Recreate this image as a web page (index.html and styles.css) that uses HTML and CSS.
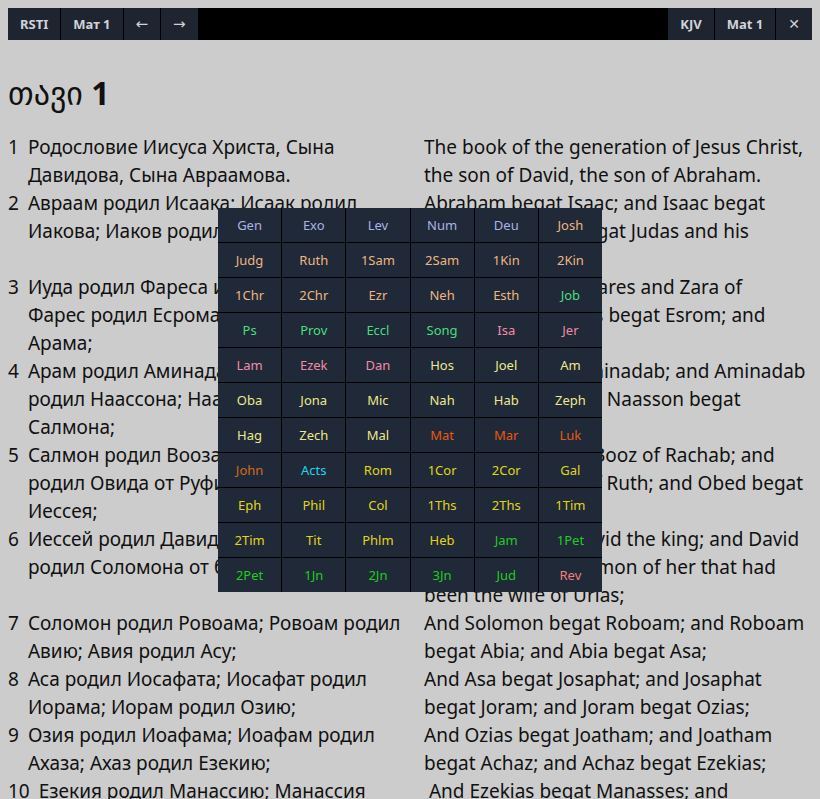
FILE: index.html
```html
<!DOCTYPE html>
<html lang="ru">
<head>
<meta charset="utf-8">
<title>Bible</title>
<link rel="stylesheet" href="styles.css">
</head>
<body>
<div class="toolbar">
  <div class="group">
    <button class="btn">RSTI</button>
    <button class="btn">Мат 1</button>
    <button class="btn arrow">←</button>
    <button class="btn arrow">→</button>
  </div>
  <div class="group">
    <button class="btn">KJV</button>
    <button class="btn">Mat 1</button>
    <button class="btn close">✕</button>
  </div>
</div>

<h1 class="title"><span class="geo">თავი</span> 1</h1>

<div class="verses">
  <p class="v"><span class="num">1</span>Родословие Иисуса Христа, Сына Давидова, Сына Авраамова.</p>
  <p class="t">The book of the generation of Jesus Christ, the son of David, the son of Abraham.</p>
  <p class="v"><span class="num">2</span>Авраам родил Исаака; Исаак родил Иакова; Иаков родил Иуду и братьев его;</p>
  <p class="t">Abraham begat Isaac; and Isaac begat Jacob; and Jacob begat Judas and his brethren;</p>
  <p class="v"><span class="num">3</span>Иуда родил Фареса и Зару от Фамари; Фарес родил Есрома; Есром родил Арама;</p>
  <p class="t">And Judas begat Phares and Zara of Thamar; and Phares begat Esrom; and Esrom begat Aram;</p>
  <p class="v"><span class="num">4</span>Арам родил Аминадава; Аминадав родил Наассона; Наассон родил Салмона;</p>
  <p class="t">And Aram begat Aminadab; and Aminadab begat Naasson; and Naasson begat Salmon;</p>
  <p class="v"><span class="num">5</span>Салмон родил Вооза от Рахавы; Вооз родил Овида от Руфи; Овид родил Иессея;</p>
  <p class="t">And Salmon begat Booz of Rachab; and Booz begat Obed of Ruth; and Obed begat Jesse;</p>
  <p class="v"><span class="num">6</span>Иессей родил Давида царя; Давид царь родил Соломона от бывшей за Урииею;</p>
  <p class="t">And Jesse begat David the king; and David the king begat Solomon of her that had been the wife of Urias;</p>
  <p class="v"><span class="num">7</span>Соломон родил Ровоама; Ровоам родил Авию; Авия родил Асу;</p>
  <p class="t">And Solomon begat Roboam; and Roboam begat Abia; and Abia begat Asa;</p>
  <p class="v"><span class="num">8</span>Аса родил Иосафата; Иосафат родил Иорама; Иорам родил Озию;</p>
  <p class="t">And Asa begat Josaphat; and Josaphat begat Joram; and Joram begat Ozias;</p>
  <p class="v"><span class="num">9</span>Озия родил Иоафама; Иоафам родил Ахаза; Ахаз родил Езекию;</p>
  <p class="t">And Ozias begat Joatham; and Joatham begat Achaz; and Achaz begat Ezekias;</p>
  <p class="v"><span class="num">10</span>Езекия родил Манассию; Манассия родил Амона; Амон родил Иосию;</p>
  <p class="t">&nbsp;And Ezekias begat Manasses; and Manasses begat Amon; and Amon begat Josias;</p>
</div>

<div class="books">
  <div class="b law">Gen</div><div class="b law">Exo</div><div class="b law">Lev</div><div class="b law">Num</div><div class="b law">Deu</div><div class="b hist">Josh</div>
  <div class="b hist">Judg</div><div class="b hist">Ruth</div><div class="b hist">1Sam</div><div class="b hist">2Sam</div><div class="b hist">1Kin</div><div class="b hist">2Kin</div>
  <div class="b hist">1Chr</div><div class="b hist">2Chr</div><div class="b hist">Ezr</div><div class="b hist">Neh</div><div class="b hist">Esth</div><div class="b wis">Job</div>
  <div class="b wis">Ps</div><div class="b wis">Prov</div><div class="b wis">Eccl</div><div class="b wis">Song</div><div class="b maj">Isa</div><div class="b maj">Jer</div>
  <div class="b maj">Lam</div><div class="b maj">Ezek</div><div class="b maj">Dan</div><div class="b min">Hos</div><div class="b min">Joel</div><div class="b min">Am</div>
  <div class="b min">Oba</div><div class="b min">Jona</div><div class="b min">Mic</div><div class="b min">Nah</div><div class="b min">Hab</div><div class="b min">Zeph</div>
  <div class="b min">Hag</div><div class="b min">Zech</div><div class="b min">Mal</div><div class="b gos">Mat</div><div class="b gos">Mar</div><div class="b gos">Luk</div>
  <div class="b john">John</div><div class="b acts">Acts</div><div class="b paul">Rom</div><div class="b paul">1Cor</div><div class="b paul">2Cor</div><div class="b paul">Gal</div>
  <div class="b paul">Eph</div><div class="b paul">Phil</div><div class="b paul">Col</div><div class="b paul">1Ths</div><div class="b paul">2Ths</div><div class="b paul">1Tim</div>
  <div class="b paul">2Tim</div><div class="b paul">Tit</div><div class="b paul">Phlm</div><div class="b paul">Heb</div><div class="b gen">Jam</div><div class="b gen">1Pet</div>
  <div class="b gen">2Pet</div><div class="b gen">1Jn</div><div class="b gen">2Jn</div><div class="b gen">3Jn</div><div class="b gen">Jud</div><div class="b rev">Rev</div>
</div>
</body>
</html>
```

FILE: styles.css
```css
html, body {
  background: #cccccc;
}
body {
  margin: 8px;
  font-family: "Noto Sans", "DejaVu Sans", sans-serif;
  color: #111111;
}
.toolbar {
  display: flex;
  justify-content: space-between;
  height: 32px;
  background: #000000;
}
.group {
  display: flex;
  gap: 1px;
}
.btn {
  height: 32px;
  margin: 0;
  border: 0;
  padding: 0 12px;
  background: #1f2530;
  color: #d0d3d8;
  font-family: "Noto Sans", "DejaVu Sans", sans-serif;
  font-weight: 700;
  font-size: 13px;
  line-height: 32px;
}
.arrow {
  font-family: "DejaVu Sans", sans-serif;
  font-weight: 400;
  font-size: 15px;
}
.close {
  font-family: "DejaVu Sans", sans-serif;
  font-size: 14px;
}
.title {
  font-size: 32px;
  font-weight: 700;
  margin: 33px 0 20px 0;
  line-height: 40px;
}
.geo {
  font-weight: 400;
}
.verses {
  display: grid;
  grid-template-columns: 404px 388px;
  column-gap: 12px;
  font-size: 19px;
  line-height: 28px;
}
.verses p {
  margin: 0;
}
.v {
  padding-left: 20px;
  text-indent: -20px;
}
.num {
  margin-right: 9px;
}
.books {
  position: fixed;
  left: 50%;
  top: 50%;
  transform: translate(-50%, -50%);
  width: 384px;
  height: 384px;
  display: grid;
  grid-template-columns: repeat(6, 1fr);
  grid-template-rows: repeat(11, 1fr);
  gap: 1px;
  background: #000000;
}
.b {
  background: #1f2937;
  display: flex;
  align-items: center;
  justify-content: center;
  font-size: 13px;
}
.law { color: #aab4e6; }
.hist { color: #efb582; }
.wis { color: #4ade80; }
.maj { color: #f38ba8; }
.min { color: #eee88f; }
.gos { color: #ea580c; }
.john { color: #d2691e; }
.acts { color: #22d3ee; }
.paul { color: #e2d51a; }
.gen { color: #22cc22; }
.rev { color: #f08080; }
```
